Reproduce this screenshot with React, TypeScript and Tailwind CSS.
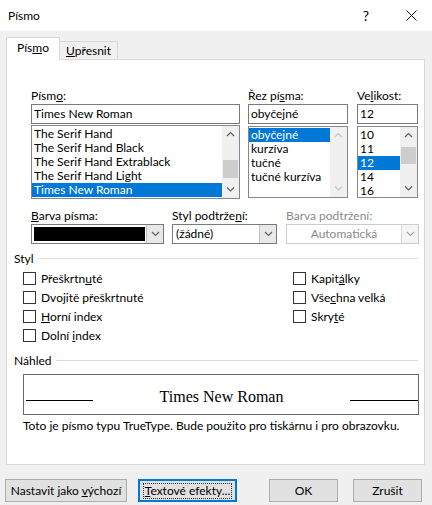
import React from "react";

const font = "font-['Lato',sans-serif]";

function Chevron({ dir, disabled }: { dir: "up" | "down"; disabled?: boolean }) {
  const pts = dir === "up" ? "1,5 4.5,1.5 8,5" : "1,1.5 4.5,5 8,1.5";
  return (
    <svg width="9" height="7" viewBox="0 0 9 7">
      <polyline
        points={pts}
        fill="none"
        stroke={disabled ? "#c4c4c4" : "#606060"}
        strokeWidth="1.2"
      />
    </svg>
  );
}

function ScrollBar({ thumbTop, thumbH, disabled }: { thumbTop?: number; thumbH?: number; disabled?: boolean }) {
  return (
    <div className="flex w-[17px] shrink-0 flex-col bg-[#f0f0f0]">
      <div className="flex h-[17px] items-center justify-center">
        <Chevron dir="up" disabled={disabled} />
      </div>
      <div className="relative flex-1">
        {thumbH ? (
          <div
            className="absolute left-[1px] right-[1px] bg-[#cdcdcd]"
            style={{ top: thumbTop, height: thumbH }}
          />
        ) : null}
      </div>
      <div className="flex h-[17px] items-center justify-center">
        <Chevron dir="down" disabled={disabled} />
      </div>
    </div>
  );
}

function ListBox({
  items,
  selected,
  className,
  thumbTop,
  thumbH,
  disabled,
}: {
  items: string[];
  selected: number;
  className: string;
  thumbTop?: number;
  thumbH?: number;
  disabled?: boolean;
}) {
  return (
    <div className={`flex border border-[#828790] bg-white ${className}`}>
      <div className="flex-1 overflow-hidden pt-[1px]">
        {items.map((it, i) => (
          <div
            key={it}
            className={`h-[14px] px-[2px] leading-[14px] ${i === selected ? "bg-[#0078d7] text-white" : ""}`}
          >
            {it}
          </div>
        ))}
      </div>
      <ScrollBar thumbTop={thumbTop} thumbH={thumbH} disabled={disabled} />
    </div>
  );
}

function DropArrow({ disabled }: { disabled?: boolean }) {
  return (
    <div
      className={`flex w-[17px] shrink-0 items-center justify-center border-l ${
        disabled ? "border-[#d9d9d9] bg-[#f4f4f4]" : "border-[#c2c2c2] bg-[#e8e8e8]"
      }`}
    >
      <svg width="9" height="6" viewBox="0 0 9 6">
        <polyline
          points="1,1 4.5,4.5 8,1"
          fill="none"
          stroke={disabled ? "#a0a0a0" : "#606060"}
          strokeWidth="1.1"
        />
      </svg>
    </div>
  );
}

function Check({ label }: { label: React.ReactNode }) {
  return (
    <div className="flex h-[19px] items-center gap-[5px]">
      <span className="h-[13px] w-[13px] border border-[#333333] bg-white" />
      <span>{label}</span>
    </div>
  );
}

function GroupHead({ title }: { title: string }) {
  return (
    <div className="flex h-[15px] items-center pl-[7px] pr-[6px] leading-[15px]">
      <span>{title}</span>
      <div className="ml-[4px] h-px flex-1 bg-[#dcdcdc]" />
    </div>
  );
}

function Btn({ w, children, focused }: { w: string; children: React.ReactNode; focused?: boolean }) {
  return (
    <div
      className={`flex h-[23px] items-center justify-center bg-[#e1e1e1] ${w} ${
        focused ? "border-2 border-[#0078d7]" : "border border-[#adadad]"
      }`}
    >
      <span className={focused ? "border border-dotted border-[#333] px-[1px] leading-[14px]" : ""}>
        {children}
      </span>
    </div>
  );
}

export default function App() {
  return (
    <div className={`flex h-[505px] w-[432px] flex-col bg-[#f0f0f0] text-[12px] text-black ${font}`}>
      {/* title bar */}
      <div className="flex h-[31px] items-center bg-white pl-[8px]">
        <span className="flex-1">Písmo</span>
        <span className="mr-[37px] text-[14px] leading-none">?</span>
        <svg width="11" height="11" viewBox="0 0 11 11" className="mr-[15px]">
          <path d="M0.5 0.5 L10.5 10.5 M10.5 0.5 L0.5 10.5" stroke="#111" strokeWidth="1" />
        </svg>
      </div>

      {/* tabs */}
      <div className="relative z-10 mb-[-1px] mt-[6px] flex h-[23px] items-end pl-[6px]">
        <div className="flex h-[23px] w-[54px] items-center justify-center border border-b-0 border-[#d9d9d9] bg-white pb-[2px]">
          Pís<u>m</u>o
        </div>
        <div className="mb-[1px] flex h-[18px] w-[58px] items-center justify-center border border-b-0 border-l-0 border-[#d9d9d9] bg-[#f0f0f0]">
          <u>U</u>přesnit
        </div>
      </div>

      {/* panel */}
      <div className="ml-[6px] h-[406px] w-[419px] border border-[#d9d9d9] bg-white">
        <div className="flex gap-[8px] pl-[24px] pt-[28px]">
          <div className="flex w-[209px] flex-col">
            <div className="h-[16px] leading-[16px]">
              Písm<u>o</u>:
            </div>
            <div className="h-[20px] border border-[#7a7a7a] px-[2px] leading-[18px]">Times New Roman</div>
            <ListBox
              className="mt-[1px] h-[74px]"
              selected={4}
              items={["The Serif Hand", "The Serif Hand Black", "The Serif Hand Extrablack", "The Serif Hand Light", "Times New Roman"]}
              thumbTop={17}
              thumbH={18}
            />
          </div>
          <div className="flex w-[100px] flex-col">
            <div className="h-[16px] leading-[16px]">
              Řez pí<u>s</u>ma:
            </div>
            <div className="h-[20px] border border-[#7a7a7a] px-[2px] leading-[18px]">obyčejné</div>
            <ListBox
              className="mt-[2px] h-[72px]"
              selected={0}
              items={["obyčejné", "kurzíva", "tučné", "tučné kurzíva"]}
              disabled
            />
          </div>
          <div className="ml-[1px] flex w-[61px] flex-col">
            <div className="h-[16px] leading-[16px]">
              Ve<u>l</u>ikost:
            </div>
            <div className="h-[20px] border border-[#7a7a7a] px-[2px] leading-[18px]">12</div>
            <ListBox
              className="mt-[2px] h-[72px]"
              selected={2}
              items={["10", "11", "12", "14", "16"]}
              thumbTop={3}
              thumbH={17}
            />
          </div>
        </div>

        {/* colour / underline row */}
        <div className="mt-[9px] flex pl-[24px]">
          <div className="flex w-[133px] flex-col">
            <div className="h-[16px] leading-[16px]">
              <u>B</u>arva písma:
            </div>
            <div className="flex h-[20px] border border-[#7a7a7a] bg-white">
              <div className="flex-1 p-[2px] pr-[1px]">
                <div className="h-full bg-black" />
              </div>
              <DropArrow />
            </div>
          </div>
          <div className="ml-[8px] flex w-[105px] flex-col">
            <div className="h-[16px] leading-[16px]">
              Styl podtrže<u>n</u>í:
            </div>
            <div className="flex h-[20px] border border-[#7a7a7a] bg-white">
              <div className="flex-1 px-[3px] leading-[18px]">(žádné)</div>
              <DropArrow />
            </div>
          </div>
          <div className="ml-[9px] flex w-[133px] flex-col">
            <div className="h-[16px] leading-[16px] text-[#8a8a8a]">Barva podtržení:</div>
            <div className="flex h-[20px] border border-[#cccccc] bg-white">
              <div className="flex-1 text-center leading-[18px] text-[#8a8a8a]">Automatická</div>
              <DropArrow disabled />
            </div>
          </div>
        </div>

        {/* styl */}
        <div className="mt-[7px]">
          <GroupHead title="Styl" />
        </div>
        <div className="mt-[3px] flex pl-[16px]">
          <div className="flex w-[270px] flex-col">
            <Check label={<>Přeškrtn<u>u</u>té</>} />
            <Check label="Dvojitě přeškrtnuté" />
            <Check label={<><u>H</u>orní index</>} />
            <Check label={<>Dolní <u>i</u>ndex</>} />
          </div>
          <div className="flex flex-col">
            <Check label={<>Kapit<u>á</u>lky</>} />
            <Check label={<>Vše<u>c</u>hna velká</>} />
            <Check label={<>Skry<u>t</u>é</>} />
          </div>
        </div>

        {/* náhled */}
        <div className="mt-[8px]">
          <GroupHead title="Náhled" />
        </div>
        <div className="ml-[16px] mt-[6px] flex h-[41px] w-[396px] items-end justify-between border border-[#696969] pb-[13px] pl-[2px]">
          <div className="h-px w-[67px] bg-black" />
          <span className="mb-[-4px] font-['Liberation_Serif',serif] text-[16px] leading-[16px]">Times New Roman</span>
          <div className="h-px w-[68px] bg-black" />
        </div>
        <div className="mt-[3px] whitespace-nowrap pl-[16px] leading-[15px]">
          Toto je písmo typu TrueType. Bude použito pro tiskárnu i pro obrazovku.
        </div>
      </div>

      {/* buttons */}
      <div className="mt-[14px] flex pl-[5px]">
        <Btn w="w-[122px]">
          Nastavit jako <u>v</u>ýchozí
        </Btn>
        <div className="ml-[11px]">
          <Btn w="w-[99px]" focused>
            <u>T</u>extové efekty...
          </Btn>
        </div>
        <div className="ml-[32px]">
          <Btn w="w-[69px]">OK</Btn>
        </div>
        <div className="ml-[15px]">
          <Btn w="w-[69px]">Zrušit</Btn>
        </div>
      </div>
    </div>
  );
}
